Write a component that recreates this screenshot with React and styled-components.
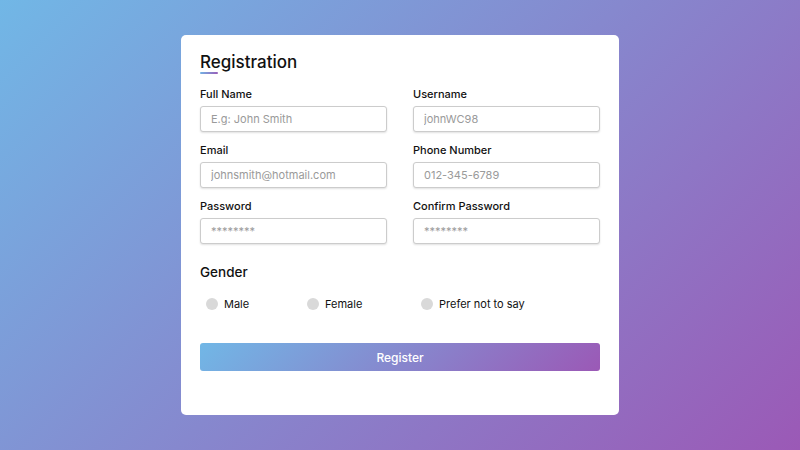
import styled, { createGlobalStyle } from "styled-components";

const GlobalStyle = createGlobalStyle`
  * { box-sizing: border-box; margin: 0; padding: 0; }
  html, body, #root { height: 100%; }
  body {
    font-family: "Inter", "Noto Sans", sans-serif;
  }
`;

const Page = styled.div`
  height: 100%;
  display: flex;
  align-items: flex-start;
  justify-content: center;
  padding-top: 35px;
  background: linear-gradient(135deg, #71b7e6, #9b59b6);
`;

const Card = styled.div`
  width: 438px;
  background: #fff;
  border-radius: 5px;
  padding: 16px 19px 44px 19px;
`;

const Title = styled.h1`
  position: relative;
  font-size: 17px;
  font-weight: 500;
  line-height: 22px;
  color: #111;

  &::before {
    content: "";
    position: absolute;
    left: 0;
    bottom: -1px;
    width: 18px;
    height: 2px;
    border-radius: 2px;
    background: linear-gradient(135deg, #71b7e6, #9b59b6);
  }
`;

const Fields = styled.div`
  display: grid;
  grid-template-columns: 187px 187px;
  justify-content: space-between;
  row-gap: 10px;
  margin-top: 13px;
`;

const Field = styled.div`
  display: flex;
  flex-direction: column;
  gap: 4px;
`;

const Label = styled.label`
  font-size: 11px;
  font-weight: 500;
  line-height: 16px;
  color: #111;
`;

const Input = styled.input`
  height: 26px;
  width: 100%;
  border: 1px solid #ccc;
  border-radius: 3px;
  padding-left: 10px;
  font-family: inherit;
  font-size: 11px;
  color: #333;
  box-shadow: 0 1px 2px rgba(0, 0, 0, 0.12);
  outline: none;

  &::placeholder {
    color: #9a9a9a;
  }
`;

const GenderTitle = styled.div`
  margin-top: 18px;
  font-size: 13.5px;
  font-weight: 500;
  line-height: 20px;
  color: #111;
`;

const Options = styled.div`
  display: grid;
  grid-template-columns: 101px 114px auto;
  margin-top: 14px;
`;

const Option = styled.label`
  display: flex;
  align-items: center;
  gap: 6px;
  margin-left: 6px;
  font-size: 11px;
  line-height: 16px;
  color: #111;
`;

const Dot = styled.span`
  width: 12px;
  height: 12px;
  border-radius: 50%;
  background: #d9d9d9;
`;

const Button = styled.button`
  margin-top: 31px;
  width: 100%;
  height: 28px;
  border: none;
  border-radius: 3px;
  background: linear-gradient(135deg, #71b7e6, #9b59b6);
  color: #fff;
  font-family: inherit;
  font-size: 12px;
  font-weight: 500;
`;

const fields = [
  ["Full Name", "E.g: John Smith"],
  ["Username", "johnWC98"],
  ["Email", "johnsmith@hotmail.com"],
  ["Phone Number", "012-345-6789"],
  ["Password", "********"],
  ["Confirm Password", "********"],
];

export default function App() {
  return (
    <Page>
      <GlobalStyle />
      <Card>
        <Title>Registration</Title>
        <Fields>
          {fields.map(([label, ph]) => (
            <Field key={label}>
              <Label>{label}</Label>
              <Input placeholder={ph} />
            </Field>
          ))}
        </Fields>
        <GenderTitle>Gender</GenderTitle>
        <Options>
          {["Male", "Female", "Prefer not to say"].map((g) => (
            <Option key={g}>
              <Dot />
              {g}
            </Option>
          ))}
        </Options>
        <Button>Register</Button>
      </Card>
    </Page>
  );
}
